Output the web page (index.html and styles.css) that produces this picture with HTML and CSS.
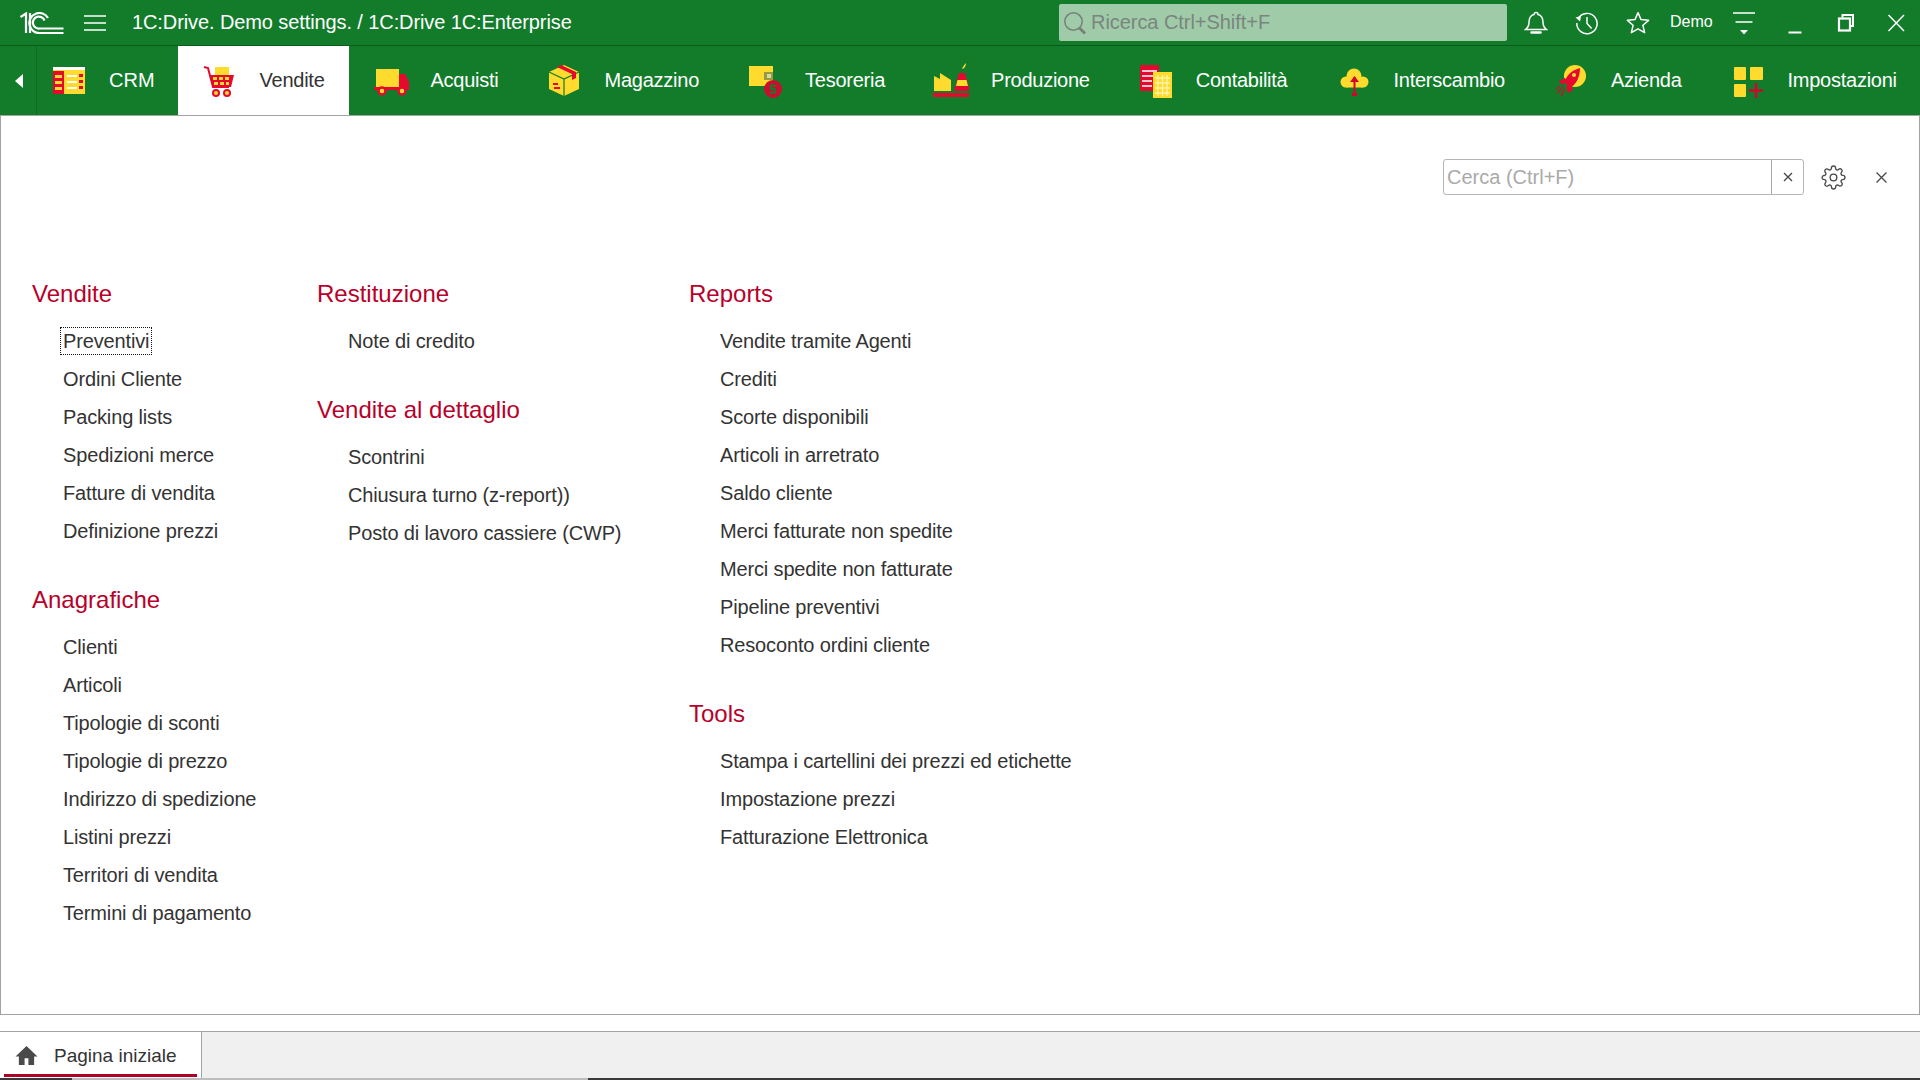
FILE: index.html
```html
<!DOCTYPE html>
<html lang="it">
<head>
<meta charset="utf-8">
<title>1C:Drive</title>
<link rel="stylesheet" href="styles.css">
</head>
<body>
<div class="app">
  <header class="topbar">
    <svg class="logo" viewBox="0 0 44 22"><g fill="none" stroke="#fff" stroke-width="2.200"><path d="M0.500 5 L6 1.500 V21"/><path d="M10 1 V21"/><path d="M28 6 A10 10 0 1 0 20 21 H43.500"/><path d="M24.500 8.500 A6 6 0 1 0 20 16.500 H43.500"/></g></svg>
    <svg class="burger" viewBox="0 0 22 16"><path d="M0 1H22M0 8H22M0 15H22" stroke="#fff" stroke-width="1.500"/></svg>
    <div class="title">1C:Drive. Demo settings. / 1C:Drive 1C:Enterprise</div>
    <div class="gsearch">
      <svg class="gsearch-ico" viewBox="0 0 24 24"><circle cx="10.500" cy="10.500" r="8.700" fill="none" stroke="#777f7a" stroke-width="1.500"/><path d="M16.500 17 L22 22.500" stroke="#777f7a" stroke-width="2.800"/></svg>
      <span>Ricerca Ctrl+Shift+F</span>
    </div>
    <div class="tbtn">
      <svg class="tico" viewBox="0 0 24 26"><path d="M12 2.500a2 2 0 0 0-2 2c-4 1-5 4.500-5 8 0 3-1 5-3.500 7h21C20 17.500 19 15.500 19 12.500c0-3.500-1-7-5-8a2 2 0 0 0-2-2z" fill="none" stroke="#fff" stroke-width="1.500"/><path d="M7.500 22.500h9" stroke="#fff" stroke-width="2.500" stroke-linecap="round"/></svg>
    </div>
    <div class="tbtn">
      <svg class="tico" viewBox="0 0 26 26"><path d="M3.500 8 A11 11 0 1 1 2 13" fill="none" stroke="#fff" stroke-width="1.600"/><path d="M0.500 7 L6.500 5.500 L5.500 11.500 Z" fill="#fff"/><path d="M13 6.500 V13.500 L18 19" fill="none" stroke="#fff" stroke-width="1.600"/></svg>
    </div>
    <div class="tbtn">
      <svg class="tico" viewBox="0 0 26 26"><path d="M13 1.800 L16.300 9.300 L24.500 10.100 L18.300 15.500 L20.200 23.500 L13 19.300 L5.800 23.500 L7.700 15.500 L1.500 10.100 L9.700 9.300 Z" fill="none" stroke="#fff" stroke-width="1.600" stroke-linejoin="round"/></svg>
    </div>
    <div class="user">Demo</div>
    <div class="tbtn tbtn-filter">
      <svg class="tico" viewBox="0 0 24 26"><path d="M1 3H23M3.500 12H20.500" stroke="#fff" stroke-width="1.500"/><path d="M8 20H16L12 24.500Z" fill="#fff"/></svg>
    </div>
    <div class="tbtn">
      <svg class="tico" viewBox="0 0 24 24"><path d="M5.500 21.500H18.500" stroke="#fff" stroke-width="2"/></svg>
    </div>
    <div class="tbtn">
      <svg class="tico" viewBox="0 0 24 24"><path d="M8.500 6.500V4H19V15H16.500" fill="none" stroke="#fff" stroke-width="2"/><rect x="5" y="7.500" width="11" height="12" fill="none" stroke="#fff" stroke-width="2.200"/></svg>
    </div>
    <div class="tbtn tbtn-close">
      <svg class="tico" viewBox="0 0 24 24"><path d="M4.500 4 L20 20M20 4 L4.500 20" stroke="#fff" stroke-width="1.500"/></svg>
    </div>
  </header>

  <nav class="nav">
    <div class="nav-back"><svg class="back-ico" viewBox="0 0 8 14"><path d="M8 0V14L0 7Z" fill="#fff"/></svg></div>
    <div class="tab tab-clipped">
      <svg class="ico" viewBox="0 0 36 36"><rect class="y" x="2" y="4" width="32" height="27"/><rect class="r" x="2" y="8" width="11" height="23"/><rect class="w" x="2" y="4" width="32" height="3"/><path class="y" d="M4 12h7v3H4zM4 18h7v3H4zM4 24h7v3H4z"/><path d="M16 13h10M16 19h10M16 25h10" stroke="#fff" stroke-width="2"/><path class="r" d="M28 11h4v3h-4zM28 17h4v3h-4zM28 23h4v3h-4z"/></svg>
      <span>CRM</span>
    </div>
    <div class="tab tab-active">
      <svg class="ico" viewBox="0 0 36 36"><rect class="y" x="13" y="4" width="14" height="9"/><path d="M2 4 L6 5 L11 24 H27" fill="none" stroke="#e5092f" stroke-width="2"/><path class="r" d="M8 12H32L29 24H11Z"/><path class="y" d="M11 14h4v3h-4zM17 14h4v3h-4zM23 14h4v3h-4zM12 19h4v3h-4zM18 19h4v3h-4zM24 19h3v3h-3z"/><circle class="y" cx="14" cy="30" r="3" stroke="#e5092f" stroke-width="2"/><circle class="y" cx="25" cy="30" r="3" stroke="#e5092f" stroke-width="2"/></svg>
      <span>Vendite</span>
    </div>
    <div class="tab">
      <svg class="ico" viewBox="0 0 36 36"><rect class="y" x="3" y="6" width="23" height="19"/><path class="r" d="M26 11H32L36 19V27H1V24H26Z"/><circle class="y" cx="9" cy="28" r="3.500" stroke="#e5092f" stroke-width="2.500"/><circle class="y" cx="29" cy="28" r="3.500" stroke="#e5092f" stroke-width="2.500"/></svg>
      <span>Acquisti</span>
    </div>
    <div class="tab">
      <svg class="ico" viewBox="0 0 36 36"><path class="y" d="M17 2L32 9V26L17 33L2 26V9Z"/><path d="M2 9L17 16L32 9M17 16V33" fill="none" stroke="#127c2b" stroke-width="1.200"/><path class="r" d="M10 4L14 2L29 9V15L25 17V11Z"/><path class="r" d="M6 20h5v2H6zM7 24h6v2H7z"/></svg>
      <span>Magazzino</span>
    </div>
    <div class="tab">
      <svg class="ico" viewBox="0 0 36 36"><rect class="y" x="2" y="3" width="24" height="20"/><rect x="17" y="9" width="9" height="8" fill="#9a9a3a"/><rect x="20" y="11" width="4" height="4" fill="#d8d8b0"/><circle cx="26" cy="26" r="9" fill="#c8102e"/><path d="M29 22.500h-5v3.500h4v3.500h-5" fill="none" stroke="#127c2b" stroke-width="1.800"/></svg>
      <span>Tesoreria</span>
    </div>
    <div class="tab">
      <svg class="ico" viewBox="0 0 36 36"><path class="y" d="M1 28V13L7 16V10L18 17V28Z"/><path class="r" d="M27 10h6l5 18H22Z" transform="translate(-1 0)"/><path class="y" d="M24.500 17H33.500L35 23H23Z"/><path class="y" d="M29 6C30 3 32 1 33 0 33 3 31 6 29 6Z"/><rect class="r" x="0" y="30" width="36" height="4"/></svg>
      <span>Produzione</span>
    </div>
    <div class="tab">
      <svg class="ico" viewBox="0 0 36 36"><rect class="r" x="2" y="2" width="19" height="26"/><path d="M4 8H19M4 13H19M4 18H14M4 23H14" stroke="#ffc5cc" stroke-width="2"/><rect class="y" x="15" y="9" width="19" height="26"/><path d="M17 15H32M17 20H32M17 25H32M17 30H32M20 12V33M24.500 12V33M29 12V33" stroke="#fff3a8" stroke-width="1.300"/></svg>
      <span>Contabilità</span>
    </div>
    <div class="tab">
      <svg class="ico" viewBox="0 0 36 36"><circle class="y" cx="18" cy="13" r="7.500"/><circle class="y" cx="10" cy="19" r="5.500"/><circle class="y" cx="27" cy="19" r="5.500"/><rect class="y" x="10" y="16" width="17" height="8.500"/><path d="M18.500 14V31" stroke="#d0062c" stroke-width="2"/><path d="M14 19L18.500 13L23 19ZM16 30H21V33H16Z" fill="#d0062c"/></svg>
      <span>Interscambio</span>
    </div>
    <div class="tab">
      <svg class="ico" viewBox="0 0 36 36"><circle class="y" cx="22" cy="13" r="11"/><path class="r" d="M27 5C27 13 24 21 17 25L12 20C12 13 19 7 27 5Z"/><path class="r" d="M12 15L6 18 9 22 14 18ZM17 20L20 27 15 30 13 24Z"/><circle class="y" cx="21" cy="12" r="2"/><path d="M10 24L4 30M12 26L8 33M7 23L3 26" stroke="#c8102e" stroke-width="1.500"/></svg>
      <span>Azienda</span>
    </div>
    <div class="tab">
      <svg class="ico" viewBox="0 0 36 36"><rect class="y" x="4" y="4" width="12" height="13" rx="1"/><rect class="y" x="20" y="4" width="13" height="13" rx="1"/><rect class="y" x="4" y="21" width="12" height="13" rx="1"/><path d="M26 20V35M19 27.500H33" stroke="#d0062c" stroke-width="2.500"/></svg>
      <span>Impostazioni</span>
    </div>
  </nav>

  <main class="panel">
    <div class="tools">
      <div class="find">
        <span class="find-text">Cerca (Ctrl+F)</span>
        <span class="find-clear"><svg class="x-ico" viewBox="0 0 10 10"><path d="M1 1L9 9M9 1L1 9" stroke="#444" stroke-width="1.300"/></svg></span>
      </div>
      <svg class="gear" viewBox="0 0 24 24"><circle cx="12" cy="12" r="3.200" fill="none" stroke="#4a4a4a" stroke-width="1.300"/><path fill="none" stroke="#4a4a4a" stroke-width="1.300" d="M19.400 15a1.650 1.650 0 0 0 .33 1.820l.06.06a2 2 0 0 1 0 2.830 2 2 0 0 1-2.830 0l-.06-.06a1.650 1.650 0 0 0-1.820-.33 1.650 1.650 0 0 0-1 1.510V21a2 2 0 0 1-2 2 2 2 0 0 1-2-2v-.09A1.650 1.650 0 0 0 9 19.400a1.650 1.650 0 0 0-1.820.33l-.06.06a2 2 0 0 1-2.830 0 2 2 0 0 1 0-2.830l.06-.06a1.650 1.650 0 0 0 .33-1.820 1.650 1.650 0 0 0-1.510-1H3a2 2 0 0 1-2-2 2 2 0 0 1 2-2h.09A1.650 1.650 0 0 0 4.600 9a1.650 1.650 0 0 0-.33-1.820l-.06-.06a2 2 0 0 1 0-2.830 2 2 0 0 1 2.830 0l.06.06a1.650 1.650 0 0 0 1.820.33H9a1.650 1.650 0 0 0 1-1.510V3a2 2 0 0 1 2-2 2 2 0 0 1 2 2v.09a1.650 1.650 0 0 0 1 1.510 1.650 1.650 0 0 0 1.820-.33l.06-.06a2 2 0 0 1 2.830 0 2 2 0 0 1 0 2.830l-.06.06a1.650 1.650 0 0 0-.33 1.820V9a1.650 1.650 0 0 0 1.510 1H21a2 2 0 0 1 2 2 2 2 0 0 1-2 2h-.09a1.650 1.650 0 0 0-1.510 1z"/></svg>
      <svg class="panel-close" viewBox="0 0 10 10"><path d="M0.500 0.500L9.500 9.500M9.500 0.500L0.500 9.500" stroke="#444" stroke-width="1.100"/></svg>
    </div>
    <div class="cols">
      <div class="col">
        <section class="group">
          <h2>Vendite</h2>
          <ul>
            <li><span class="focus">Preventivi</span></li>
            <li>Ordini Cliente</li>
            <li>Packing lists</li>
            <li>Spedizioni merce</li>
            <li>Fatture di vendita</li>
            <li>Definizione prezzi</li>
          </ul>
        </section>
        <section class="group">
          <h2>Anagrafiche</h2>
          <ul>
            <li>Clienti</li>
            <li>Articoli</li>
            <li>Tipologie di sconti</li>
            <li>Tipologie di prezzo</li>
            <li>Indirizzo di spedizione</li>
            <li>Listini prezzi</li>
            <li>Territori di vendita</li>
            <li>Termini di pagamento</li>
          </ul>
        </section>
      </div>
      <div class="col">
        <section class="group">
          <h2>Restituzione</h2>
          <ul>
            <li>Note di credito</li>
          </ul>
        </section>
        <section class="group">
          <h2>Vendite al dettaglio</h2>
          <ul>
            <li>Scontrini</li>
            <li>Chiusura turno (z-report))</li>
            <li>Posto di lavoro cassiere (CWP)</li>
          </ul>
        </section>
      </div>
      <div class="col">
        <section class="group">
          <h2>Reports</h2>
          <ul>
            <li>Vendite tramite Agenti</li>
            <li>Crediti</li>
            <li>Scorte disponibili</li>
            <li>Articoli in arretrato</li>
            <li>Saldo cliente</li>
            <li>Merci fatturate non spedite</li>
            <li>Merci spedite non fatturate</li>
            <li>Pipeline preventivi</li>
            <li>Resoconto ordini cliente</li>
          </ul>
        </section>
        <section class="group">
          <h2>Tools</h2>
          <ul>
            <li>Stampa i cartellini dei prezzi ed etichette</li>
            <li>Impostazione prezzi</li>
            <li>Fatturazione Elettronica</li>
          </ul>
        </section>
      </div>
    </div>
  </main>

  <div class="panel-gap"></div>

  <footer class="open-tabs">
    <div class="home-tab">
      <svg class="home-ico" viewBox="0 0 24 22"><path d="M12 1L0.500 12H4V21H10V14H14V21H20V12H23.500Z" fill="#4a4a4a"/></svg>
      <span>Pagina iniziale</span>
    </div>
  </footer>
  <div class="scrollbar">
    <div class="sb-dark sb-start"></div>
    <div class="sb-thumb"></div>
    <div class="sb-dark sb-end"></div>
  </div>
</div>
</body>
</html>
```

FILE: styles.css
```css
* { box-sizing: border-box; }
html, body { margin: 0; padding: 0; height: 100%; }
body { font-family: "Liberation Sans", Arial, sans-serif; font-size: 20px; color: #333; background: #fff; overflow: hidden; }
.app { height: 1080px; display: flex; flex-direction: column; }

.topbar { height: 46px; flex: none; display: flex; align-items: center; background: #127c2b; border-bottom: 1px solid #0a5c1a; color: #fff; }
.logo { width: 44px; height: 22px; margin-left: 20px; flex: none; }
.burger { width: 22px; height: 16px; margin-left: 20px; flex: none; }
.title { margin-left: 26px; font-size: 20px; letter-spacing: -0.1px; white-space: nowrap; }
.gsearch { margin-left: auto; width: 448px; height: 37px; background: #9fcba8; border-radius: 2px; display: flex; align-items: center; color: #7b8580; font-size: 20px; padding-left: 4px; gap: 4px; letter-spacing: -0.05px; }
.gsearch-ico { width: 24px; height: 24px; flex: none; }
.tbtn { width: 51px; height: 45px; flex: none; display: flex; align-items: center; justify-content: center; }
.gsearch + .tbtn { margin-left: 3px; }
.tbtn-filter { margin-left: 5px; }
.tbtn-close { width: 49px; }
.tico { width: 24px; height: 26px; }
.user { font-size: 16px; margin-left: 7px; width: 43px; margin-top: -2px; }

.nav { height: 69px; flex: none; display: flex; background: #127c2b; color: #fff; overflow: hidden; }
.nav-back { width: 37px; flex: none; border-right: 1px solid #0d6a22; display: flex; align-items: center; justify-content: center; padding-left: 2px; }
.back-ico { width: 8px; height: 14px; }
.tab { flex: none; display: flex; align-items: center; gap: 22px; padding: 0 24px; white-space: nowrap; letter-spacing: -0.25px; }
.tab-clipped { padding-left: 14px; padding-right: 23px; letter-spacing: 0; }
.tab-active { background: #fff; color: #333; }
.ico { width: 36px; height: 36px; flex: none; }
.y { fill: #ffdb2d; }
.r { fill: #e5092f; }
.w { fill: #fff; }

.panel { flex: none; height: 900px; border: 1px solid #a3a3a3; background: #fff; padding: 43px 0 0 31px; }
.tools { display: flex; align-items: center; justify-content: flex-end; height: 36px; padding-right: 32px; }
.find { width: 361px; height: 36px; border: 1px solid #b5b5b5; border-radius: 3px; display: flex; align-items: center; font-size: 20px; color: #aaa; }
.find-text { flex: 1; padding-left: 3px; }
.find-clear { width: 32px; height: 100%; border-left: 1px solid #a8a8a8; display: flex; align-items: center; justify-content: center; }
.x-ico { width: 10px; height: 10px; }
.gear { width: 25px; height: 25px; margin-left: 17px; flex: none; }
.panel-close { width: 11px; height: 11px; margin-left: 30px; flex: none; }

.cols { display: grid; grid-template-columns: 285px 372px auto; margin-top: 84px; }
.group + .group { margin-top: 35px; }
h2 { margin: 0 0 13px; font-size: 24px; line-height: 30px; font-weight: 400; color: #b8002a; }
ul { list-style: none; margin: 0; padding: 0 0 0 31px; }
li { line-height: 38px; height: 38px; white-space: nowrap; letter-spacing: -0.15px; }
.focus { outline: 1px dotted #111; padding: 2px 2px 2px 2px; margin-left: -2px; }

.panel-gap { height: 16px; flex: none; background: #fff; }
.open-tabs { flex: none; height: 47px; border-top: 1px solid #a3a3a3; background: #f0f0f0; display: flex; }
.home-tab { width: 202px; position: relative; background: #fff; border-right: 1px solid #a3a3a3; display: flex; align-items: center; gap: 16px; padding: 2px 0 0 15px; font-size: 19px; }
.home-tab::after { content: ""; position: absolute; left: 4px; width: 193px; bottom: 1px; height: 3px; background: #b0002a; }
.home-ico { width: 23px; height: 21px; flex: none; margin-top: -2px; }
.scrollbar { flex: none; height: 2px; display: flex; }
.sb-dark { background: #3a3a3a; }
.sb-start { width: 72px; }
.sb-thumb { width: 516px; background: #bdbdbd; }
.sb-end { flex: 1; }
```
